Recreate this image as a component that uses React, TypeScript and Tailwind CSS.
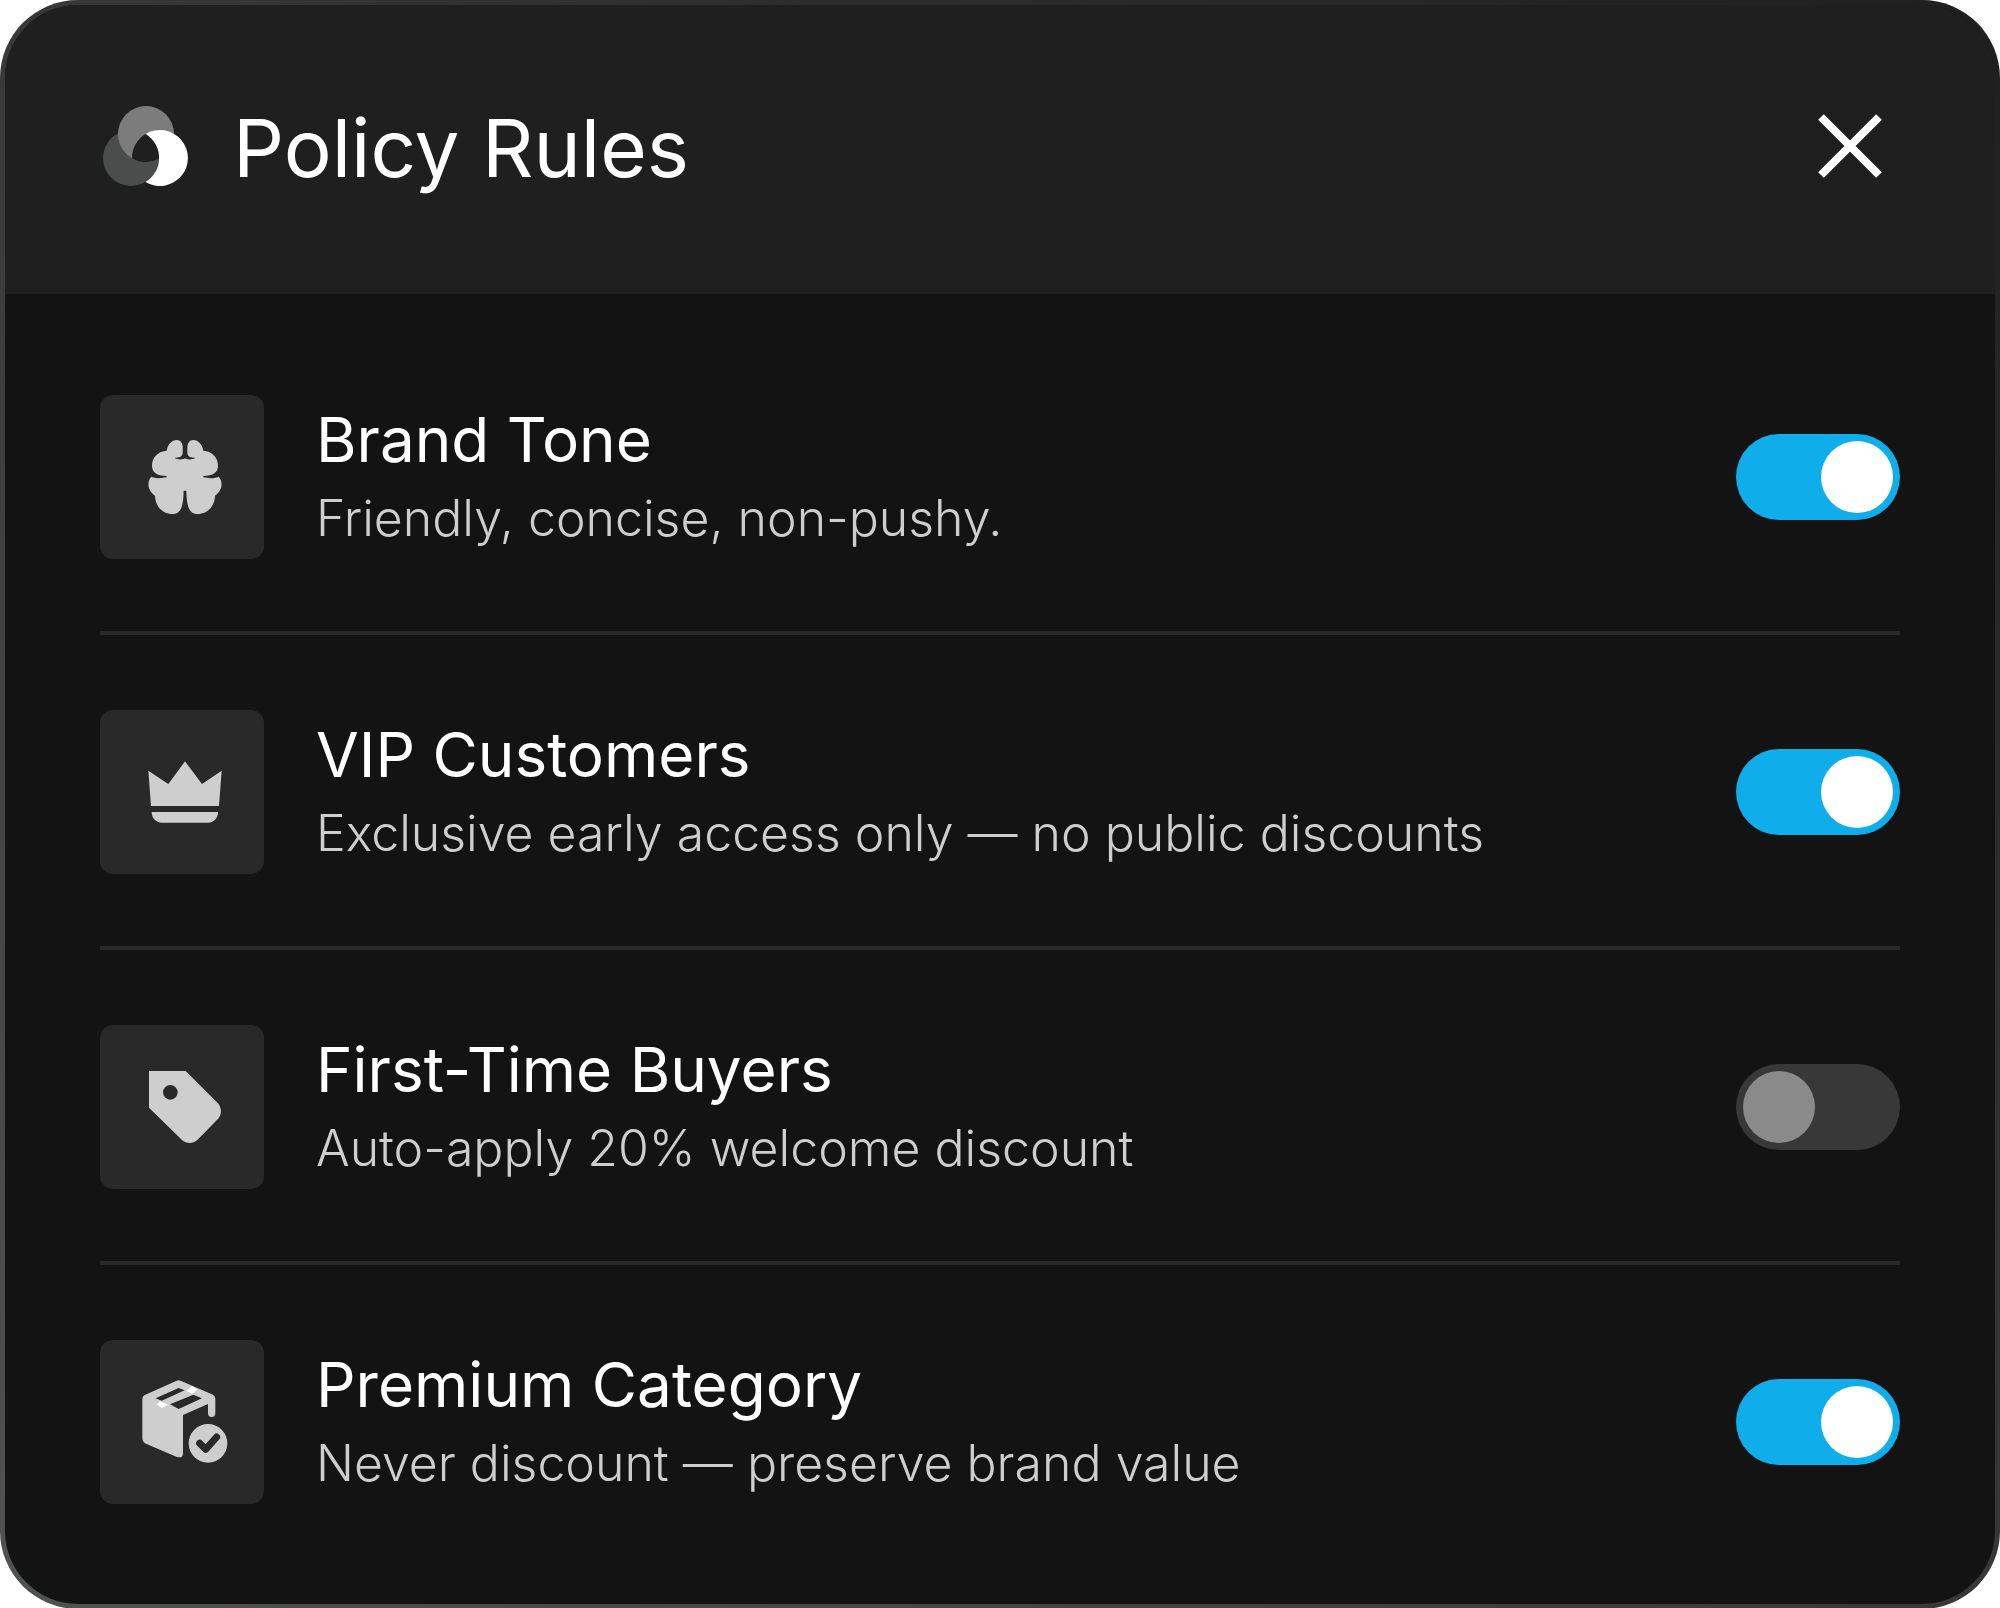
import React, { useState } from 'react';

type Rule = {
  id: string;
  title: string;
  description: string;
  enabled: boolean;
  icon: React.ReactNode;
};

function LogoMark() {
  return (
    <svg viewBox="0 0 86 82" className="h-[82px] w-[86px] shrink-0" aria-hidden="true">
      <circle cx="28" cy="53" r="28" fill="#4b4d4c" />
      <circle cx="43" cy="29" r="28" fill="#7c7c7c" />
      <path d="M42.5 29A28 28 0 1 1 42.5 77A28 28 0 0 0 42.5 29Z" fill="#ffffff" />
      <path
        d="M42.5 29A28 28 0 0 1 56 53.8A28 28 0 0 1 29 53.2A28 28 0 0 1 42.5 29Z"
        fill="#1f1f1f"
      />
    </svg>
  );
}

function BrainIcon() {
  return (
    <svg viewBox="0 0 492 492" className="h-full w-full" fill="#cecece" aria-hidden="true">
      <path d="M255 190C250 194 235 195 225 190V188C240 189 248 184 248 172V157C248 145 242 135 230 135C216 135 203 148 200 167C175 169 156 185 156 212C156 232 170 242 200 243V247C180 251 165 250 154 245C142 257 140 285 165 302C166 332 186 357 217 357C240 357 250 340 251 287H259C260 340 270 357 293 357C324 357 344 332 345 302C370 285 368 257 356 245C345 250 330 251 310 247V243C340 242 354 232 354 212C354 185 335 169 310 167C307 148 294 135 280 135C268 135 262 145 262 157V172C262 184 270 189 285 188V190C275 195 260 194 255 190Z" />
    </svg>
  );
}

function CrownIcon() {
  return (
    <svg viewBox="0 0 492 492" className="h-full w-full" fill="#cecece" aria-hidden="true">
      <path d="M255 154L306 222L365 182L357 288H153L145 182L205 222Z" />
      <path d="M155 306H354C354 324 342 338 324 338H185C167 338 155 324 155 306Z" />
    </svg>
  );
}

function TagIcon() {
  return (
    <svg viewBox="0 0 492 492" className="h-full w-full" fill="#cecece" aria-hidden="true">
      <path
        fillRule="evenodd"
        d="M147 138H257L353 234C366 248 366 270 353 283L292 345C279 357 259 357 246 345L147 248ZM211 180A22 22 0 1 0 211 224A22 22 0 1 0 211 180Z"
      />
    </svg>
  );
}

function BoxCheckIcon() {
  return (
    <svg viewBox="0 0 492 492" className="h-full w-full" fill="#cecece" aria-hidden="true">
      <path
        fillRule="evenodd"
        d="M127 177Q127 168 136 164L230 122Q236 119 242 122L339 164Q346 168 346 176V220A11 11 0 0 1 324 220V192L249 225V341Q249 353 236 352L229 350L138 311Q127 306 127 294ZM167 175L185 182L254 151L236 144ZM210 193L236 207L306 175L280 164Z"
      />
      <path d="M171 194L179 184L204 194L185 204Z" fill="#ffffff" />
      <path d="M258 152L276 139L292 149L276 161Z" fill="#ffffff" />
      <circle cx="324" cy="310" r="58" />
      <path
        d="M299 310L317 328L350 291"
        fill="none"
        stroke="#292929"
        strokeWidth="21"
        strokeLinecap="round"
        strokeLinejoin="round"
      />
    </svg>
  );
}

const initialRules: Rule[] = [
  {
    id: 'brand-tone',
    title: 'Brand Tone',
    description: 'Friendly, concise, non-pushy.',
    enabled: true,
    icon: <BrainIcon />,
  },
  {
    id: 'vip-customers',
    title: 'VIP Customers',
    description: 'Exclusive early access only — no public discounts',
    enabled: true,
    icon: <CrownIcon />,
  },
  {
    id: 'first-time-buyers',
    title: 'First-Time Buyers',
    description: 'Auto-apply 20% welcome discount',
    enabled: false,
    icon: <TagIcon />,
  },
  {
    id: 'premium-category',
    title: 'Premium Category',
    description: 'Never discount — preserve brand value',
    enabled: true,
    icon: <BoxCheckIcon />,
  },
];

function RuleRow({ rule, onToggle }: { rule: Rule; onToggle: () => void }) {
  return (
    <li className="flex items-center gap-[52px] border-b-4 border-[#292929] pt-[75px] pb-[72px] first:pt-0 last:border-b-0 last:pb-0">
      <div className="h-[164px] w-[164px] shrink-0 rounded-[13px] bg-[#292929]">{rule.icon}</div>
      <div className="min-w-0 flex-1">
        <label htmlFor={rule.id} className="block pt-0.5 text-[62px] leading-[80px] text-white">
          {rule.title}
        </label>
        <p id={`${rule.id}-text`} className="text-[50px] leading-[76px] font-light text-[#cecece]">
          {rule.description}
        </p>
      </div>
      <input
        id={rule.id}
        type="checkbox"
        role="switch"
        checked={rule.enabled}
        onChange={onToggle}
        aria-describedby={`${rule.id}-text`}
        className="h-[86px] w-[164px] shrink-0 cursor-pointer appearance-none rounded-full bg-[#383838] p-[7px] before:block before:h-[72px] before:w-[72px] before:rounded-full before:bg-[#8a8a8a] checked:bg-[#0fadea] checked:before:ml-auto checked:before:bg-white"
      />
    </li>
  );
}

export default function App() {
  const [rules, setRules] = useState(initialRules);

  const toggleRule = (id: string) => {
    setRules((current) =>
      current.map((rule) => (rule.id === id ? { ...rule, enabled: !rule.enabled } : rule))
    );
  };

  return (
    <section
      aria-labelledby="policy-title"
      className="w-full rounded-[78px] bg-linear-to-tr from-[#505251] via-[#383838] to-[#1f1f1f] p-[5px] font-[Inter,sans-serif]"
    >
      <div className="overflow-hidden rounded-[73px] bg-[#131313]">
        <header className="flex items-center justify-between bg-[#1f1f1f] px-[95px] pt-[85px] pb-[93px]">
          <div className="flex items-center gap-[44px] pl-[3px]">
            <LogoMark />
            <h1 id="policy-title" className="pt-1 text-[80px] leading-[107px] text-white">
              Policy Rules
            </h1>
          </div>
          <button type="button" aria-label="Close" className="h-[100px] w-[100px] cursor-pointer">
            <svg viewBox="0 0 100 100" className="h-full w-full" fill="none" stroke="#ffffff" strokeWidth="8">
              <path d="M21 21L79 79M79 21L21 79" />
            </svg>
          </button>
        </header>

        <ul className="px-[95px] pt-[101px] pb-[100px]">
          {rules.map((rule) => (
            <RuleRow key={rule.id} rule={rule} onToggle={() => toggleRule(rule.id)} />
          ))}
        </ul>
      </div>
    </section>
  );
}
